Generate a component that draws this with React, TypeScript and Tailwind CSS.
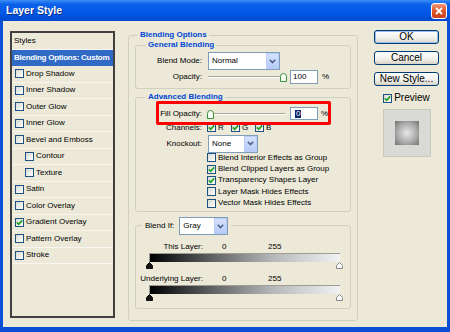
import type { ReactNode } from 'react'

const styleItems = [
  { label: 'Drop Shadow' },
  { label: 'Inner Shadow' },
  { label: 'Outer Glow' },
  { label: 'Inner Glow' },
  { label: 'Bevel and Emboss' },
  { label: 'Contour', sub: true },
  { label: 'Texture', sub: true },
  { label: 'Satin' },
  { label: 'Color Overlay' },
  { label: 'Gradient Overlay', on: true },
  { label: 'Pattern Overlay' },
  { label: 'Stroke' },
]

const maskOptions = [
  { label: 'Blend Interior Effects as Group', on: false },
  { label: 'Blend Clipped Layers as Group', on: true },
  { label: 'Transparency Shapes Layer', on: true },
  { label: 'Layer Mask Hides Effects', on: false },
  { label: 'Vector Mask Hides Effects', on: false },
]

function Check({ on }: { on?: boolean }) {
  return (
    <span className="w-[9px] h-[9px] border border-[#1c5180] bg-[linear-gradient(135deg,#d8d8d2,#ffffff)] flex items-center justify-center shrink-0">
      {on && (
        <svg width="7" height="7" viewBox="0 0 7 7">
          <path d="M0.8 3.4 L2.7 5.3 L6.2 1.4" stroke="#21a121" strokeWidth="1.7" fill="none" />
        </svg>
      )}
    </span>
  )
}

function Combo({ value, className }: { value: string; className: string }) {
  return (
    <div className={`h-[18px] border border-[#7f9db9] bg-white flex items-center ${className}`}>
      <span className="flex-1 pl-[3px] text-[8px] leading-none">{value}</span>
      <span className="w-[13px] h-[16px] bg-[linear-gradient(180deg,#d6e2fd,#b6cbf8)] border border-[#b9cdf5] flex items-center justify-center">
        <svg width="7" height="5" viewBox="0 0 7 5">
          <path d="M0.8 0.8 L3.5 3.6 L6.2 0.8" stroke="#4d6185" strokeWidth="1.6" fill="none" />
        </svg>
      </span>
    </div>
  )
}

function Thumb() {
  return (
    <svg width="7" height="9" viewBox="0 0 7 9">
      <path d="M0.5 8.5 V3.5 Q0.5 0.5 3.5 0.5 Q6.5 0.5 6.5 3.5 V8.5 Z" stroke="#3a8f3a" fill="#f6fff4" />
    </svg>
  )
}

function Slider({ at }: { at: 'start' | 'end' }) {
  return (
    <div className="relative w-[80px] h-[14px] flex items-center">
      <div className="w-[77px] h-[2px] border-t border-[#a7a69b] border-b border-b-white" />
      <div className={`absolute top-[3px] ${at === 'end' ? 'left-[72px]' : 'left-[-1px]'}`}>
        <Thumb />
      </div>
    </div>
  )
}

function Group({ legend, className, children }: { legend: ReactNode; className: string; children: ReactNode }) {
  return (
    <div className={`border border-[#d0d0bf] rounded-[3px] ${className}`}>
      {legend}
      {children}
    </div>
  )
}

function Legend({ text, outer }: { text: string; outer?: boolean }) {
  return (
    <div
      className={`-mt-[6px] ${outer ? 'ml-[3px]' : 'ml-[10px]'} px-[2px] w-fit h-[10px] bg-[#ece9d8] text-[8px] leading-[10px] font-bold text-[#0046d5]`}
    >
      {text}
    </div>
  )
}

function Label({ text }: { text: string }) {
  return <span className="w-[66px] text-right text-[8px] leading-none shrink-0">{text}</span>
}

function Btn({ text, main }: { text: string; main?: boolean }) {
  return (
    <div
      className={`w-[65px] h-[14px] rounded-[3px] border border-[#003c74] bg-[linear-gradient(180deg,#ffffff,#f0f0ea_60%,#d8d2c6)] flex items-center justify-center text-[10px] leading-none ${main ? 'shadow-[inset_0_0_0_1px_#9fbdf0]' : ''}`}
    >
      {text}
    </div>
  )
}

function BlendBar({ label }: { label: string }) {
  return (
    <div>
      <div className="flex items-center h-[10px] text-[8px] leading-none">
        <span className="w-[67px] text-right">{label}</span>
        <span className="ml-[19px] w-[46px]">0</span>
        <span>255</span>
      </div>
      <div className="ml-[13px] mt-[1px] w-[191px] h-[9px] border-t border-l border-[#9d9d94] bg-[linear-gradient(90deg,#000000,#5a5a5a_30%,#b8b8b8_65%,#f2f2f2)]" />
      <div className="ml-[10px] w-[197px] h-[7px] flex justify-between">
        <svg width="7" height="7" viewBox="0 0 7 7">
          <path d="M0.5 6.5 V3.5 L3.5 0.5 L6.5 3.5 V6.5 Z" fill="#111" stroke="#111" />
        </svg>
        <svg width="7" height="7" viewBox="0 0 7 7">
          <path d="M0.5 6.5 V3.5 L3.5 0.5 L6.5 3.5 V6.5 Z" fill="#fafafa" stroke="#8a8a8a" />
        </svg>
      </div>
    </div>
  )
}

export default function App() {
  return (
    <div className="w-[450px] h-[332px] bg-[#0a4fd6] flex flex-col overflow-hidden font-['Liberation_Sans',Arial,sans-serif] text-black">
      {/* Title bar */}
      <div className="h-[21px] shrink-0 bg-[linear-gradient(180deg,#3c8ff7_0%,#0c62e8_20%,#0057e6_65%,#0048ce_100%)] flex items-center pl-[6px] pr-[3px]">
        <span className="flex-1 text-white font-bold text-[10.5px] leading-none [text-shadow:1px_1px_0_#0a2f8a]">Layer Style</span>
        <div className="w-[16px] h-[16px] rounded-[3px] border border-white bg-[linear-gradient(180deg,#f29a7a,#e4582f_45%,#c8401c)] flex items-center justify-center">
          <svg width="8" height="8" viewBox="0 0 8 8">
            <path d="M1 1 L7 7 M7 1 L1 7" stroke="#fff" strokeWidth="1.8" />
          </svg>
        </div>
      </div>

      <div className="flex-1 mx-[3px] mb-[5px] bg-[#ece9d8] flex">
        {/* Styles list */}
        <div className="ml-[7px] mt-[10px] w-[105px] h-[287px] border-2 border-[#404040] flex flex-col text-[8px] leading-none">
          <div className="h-[16.5px] flex items-center pl-[2px] border-b border-[#f7f6f0]">Styles</div>
          <div className="h-[16.5px] flex items-center pl-[2px] bg-[#316ac5] text-white font-bold whitespace-nowrap tracking-[-0.25px]">
            Blending Options: Custom
          </div>
          {styleItems.map((it) => (
            <div
              key={it.label}
              className={`h-[16.5px] flex items-center gap-[2px] border-b border-[#f7f6f0] ${it.sub ? 'pl-[13px]' : 'pl-[3px]'}`}
            >
              <Check on={it.on} />
              <span>{it.label}</span>
            </div>
          ))}
        </div>

        {/* Blending options */}
        <div className="ml-[13px] mt-[14px]">
          <Group className="w-[230px] h-[286px] px-[6px]" legend={<Legend text="Blending Options" outer />}>
            <Group className="mt-[5px] h-[44px]" legend={<Legend text="General Blending" />}>
              <div className="mt-[2px] h-[18px] flex items-center gap-[6px]">
                <Label text="Blend Mode:" />
                <Combo value="Normal" className="w-[72px]" />
              </div>
              <div className="h-[14px] flex items-center gap-[6px]">
                <Label text="Opacity:" />
                <div className="flex items-center">
                  <Slider at="end" />
                  <div className="ml-[2px] w-[28px] h-[14px] border border-[#7f9db9] bg-white text-[8px] leading-none flex items-center pl-[2px]">100</div>
                  <span className="ml-[4px] text-[8px] leading-none">%</span>
                </div>
              </div>
            </Group>

            <Group className="relative mt-[8px] h-[115px]" legend={<Legend text="Advanced Blending" />}>
              <div className="mt-[5px] h-[13px] flex items-center gap-[6px]">
                <Label text="Fill Opacity:" />
                <div className="flex items-center">
                  <Slider at="start" />
                  <div className="ml-[2px] w-[28px] h-[13px] border border-[#7f9db9] bg-white text-[8px] leading-none flex items-center pl-[4px]">
                    <span className="bg-[#0a246a] text-white px-[1px]">0</span>
                  </div>
                  <span className="ml-[3px] text-[8px] leading-none">%</span>
                </div>
              </div>
              <div className="mt-[2px] h-[11px] flex items-center gap-[5px]">
                <Label text="Channels:" />
                <div className="flex text-[8px] leading-none">
                  {['R', 'G', 'B'].map((c) => (
                    <span key={c} className="w-[24px] flex items-center gap-[2px]">
                      <Check on />
                      {c}
                    </span>
                  ))}
                </div>
              </div>
              <div className="mt-[2px] h-[17px] flex items-center gap-[6px]">
                <Label text="Knockout:" />
                <Combo value="None" className="w-[50px] h-[17px]" />
              </div>
              <div className="pl-[71px] flex flex-col text-[8px] leading-none">
                {maskOptions.map((o) => (
                  <div key={o.label} className="h-[11.4px] flex items-center gap-[2px]">
                    <Check on={o.on} />
                    <span>{o.label}</span>
                  </div>
                ))}
              </div>
              {/* red highlight */}
              <div className="absolute left-[20px] top-[3px] w-[175px] h-[24px] border-[3px] border-[#ff0000] rounded-[2px]" />
            </Group>

            <Group
              className="mt-[13px] h-[84px]"
              legend={
                <div className="-mt-[9px] ml-[6px] px-[3px] w-fit h-[18px] bg-[#ece9d8] flex items-center gap-[5px]">
                  <span className="text-[8px] leading-none">Blend If:</span>
                  <Combo value="Gray" className="w-[49px]" />
                </div>
              }
            >
              <div className="mt-[7px]">
                <BlendBar label="This Layer:" />
              </div>
              <div className="mt-[5px]">
                <BlendBar label="Underlying Layer:" />
              </div>
            </Group>
          </Group>
        </div>

        {/* Buttons */}
        <div className="ml-[16px] mt-[9px] w-[65px] flex flex-col items-center">
          <Btn text="OK" main />
          <div className="mt-[7px]">
            <Btn text="Cancel" />
          </div>
          <div className="mt-[7px]">
            <Btn text="New Style..." />
          </div>
          <div className="mt-[7px] flex items-center gap-[2px] text-[10px] leading-none">
            <Check on />
            <span>Preview</span>
          </div>
          <div className="mt-[6px] w-[48px] h-[48px] bg-[#d9d9d6] border border-[#c8c8c0] flex items-center justify-center">
            <div className="w-[24px] h-[24px] bg-[radial-gradient(circle,#e8e8e8_0%,#a8a8a8_60%,#707070_100%)]" />
          </div>
        </div>
      </div>
    </div>
  )
}
